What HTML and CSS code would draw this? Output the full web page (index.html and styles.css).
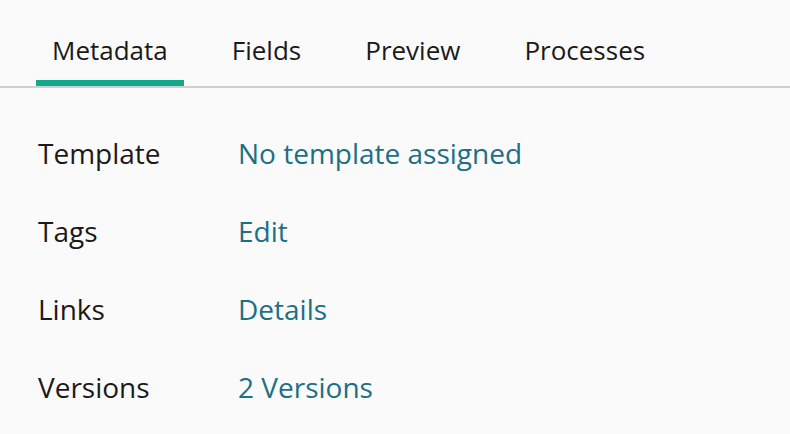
FILE: index.html
```html
<!DOCTYPE html>
<html>
<head>
<meta charset="utf-8">
<link rel="stylesheet" href="styles.css">
</head>
<body>
<nav class="tabs">
  <a class="tab active">Metadata</a>
  <a class="tab">Fields</a>
  <a class="tab">Preview</a>
  <a class="tab">Processes</a>
</nav>
<dl class="meta">
  <dt>Template</dt><dd><a class="link">No template assigned</a></dd>
  <dt>Tags</dt><dd><a class="link">Edit</a></dd>
  <dt>Links</dt><dd><a class="link">Details</a></dd>
  <dt>Versions</dt><dd><a class="link">2 Versions</a></dd>
</dl>
</body>
</html>
```
FILE: styles.css
```css
html, body {
  margin: 0;
  padding: 0;
  background: #fafafa;
}
body {
  font-family: "Open Sans", "Noto Sans", sans-serif;
  color: #1a1a1a;
}
.tabs {
  display: flex;
  gap: 32px;
  padding-left: 36px;
  border-bottom: 2px solid #d0d0d0;
  font-size: 26px;
}
.tab {
  padding: 32px 16px 12px;
  line-height: 36px;
  border-bottom: 6px solid transparent;
  color: #1a1a1a;
}
.tab.active {
  border-bottom-color: #12a88a;
}
.meta {
  display: grid;
  grid-template-columns: 200px auto;
  row-gap: 42px;
  margin: 0;
  padding: 47px 38px;
  font-size: 28px;
  line-height: 36px;
}
.meta dt, .meta dd {
  margin: 0;
}
.link {
  color: #1d6f85;
}
```
